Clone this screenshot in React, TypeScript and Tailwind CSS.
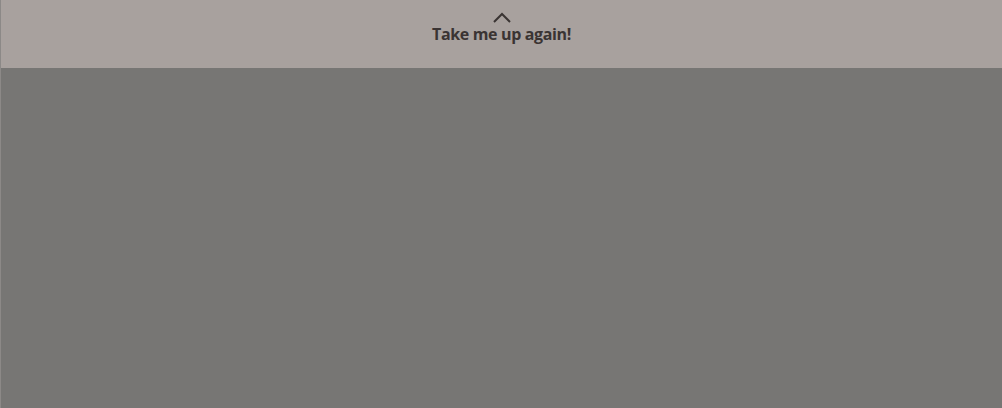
import React from "react";

export default function App() {
  return (
    <div className="w-[1002px] h-[408px] flex flex-col bg-[#777674] border-l border-[#8c8987]">
      {/* Top bar */}
      <div className="h-[68px] shrink-0 bg-[#a8a19e] flex flex-col items-center pt-[12px]">
        <svg width="20" height="11" viewBox="0 0 20 11" className="block">
          <path d="M2 10 L10 2 L18 10" fill="none" stroke="#3a3433" strokeWidth="2" />
        </svg>
        <span className="text-[16px] leading-[18px] font-bold text-[#3a3433] mt-[2px] tracking-[-0.35px]" style={{ fontFamily: "'Open Sans', sans-serif" }}>
          Take me up again!
        </span>
      </div>
      <div className="flex-1" />
    </div>
  );
}
